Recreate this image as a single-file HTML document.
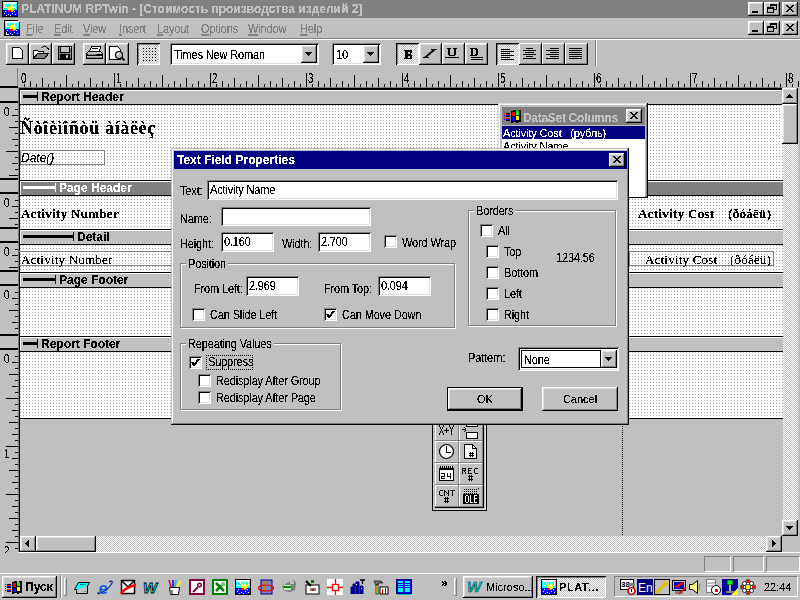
<!DOCTYPE html><html><head><meta charset="utf-8"><style>
*{margin:0;padding:0;box-sizing:border-box}
html,body{width:800px;height:600px;overflow:hidden;background:#c0c0c0;font-family:"Liberation Sans",sans-serif;font-size:11px;color:#000;position:relative}
.a{position:absolute}
.t{position:absolute;white-space:nowrap;line-height:13px}
.btn{position:absolute;background:#c0c0c0;box-shadow:inset -1px -1px #000,inset 1px 1px #fff,inset -2px -2px #808080,inset 2px 2px #dfdfdf}
.btn2{position:absolute;background:#c0c0c0;box-shadow:inset -1px -1px #000,inset 1px 1px #dfdfdf,inset -2px -2px #808080,inset 2px 2px #fff}
.tb{position:absolute;background:#c0c0c0;box-shadow:inset -1px -1px #000,inset 1px 1px #fff,inset -2px -2px #808080}
.sunk{position:absolute;background:#fff;box-shadow:inset 1px 1px #808080,inset -1px -1px #fff,inset 2px 2px #000,inset -2px -2px #dfdfdf}
.pressed{position:absolute;background:repeating-conic-gradient(#fff 0 25%,#c0c0c0 0 50%) 0 0/2px 2px;box-shadow:inset 1px 1px #000,inset -1px -1px #fff,inset 2px 2px #808080,inset -2px -2px #dfdfdf}
.grp{position:absolute;border:1px solid #808080;box-shadow:1px 1px #fff,inset 1px 1px #fff}
.chk{position:absolute;width:13px;height:13px;background:#fff;box-shadow:inset 1px 1px #808080,inset -1px -1px #fff,inset 2px 2px #000,inset -2px -2px #dfdfdf}
.dots{position:absolute;background-color:#a0a0a0;background-image:linear-gradient(to right,#fff 0 2px,transparent 2px 3px),linear-gradient(to bottom,#fff 0 2px,transparent 2px 3px);background-size:3px 3px}
.dither{position:absolute;background:repeating-conic-gradient(#fff 0 25%,#c0c0c0 0 50%) 0 0/2px 2px}
.serif{font-family:"Liberation Serif",serif}
.u{text-decoration:underline}
.k{position:absolute;background:#000}
.t{filter:url(#crisp)}</style></head><body>
<svg width="0" height="0" style="position:absolute"><filter id="crisp" x="0" y="0" width="100%" height="100%" color-interpolation-filters="sRGB"><feComponentTransfer><feFuncA type="discrete" tableValues="0 0 1 1 1"/></feComponentTransfer></filter></svg><div class="a" style="left:0px;top:0px;width:800px;height:18px;background:#808080;"></div>
<svg class="a" style="left:2px;top:1px" width="16" height="16" viewBox="0 0 16 16" shape-rendering="crispEdges"><rect x="0" y="0" width="16" height="16" fill="#000"/><rect x="1" y="1" width="14" height="8" fill="#00ffff"/><rect x="1" y="9" width="14" height="6" fill="#0000ff"/><rect x="1" y="1" width="14" height="1" fill="#fff"/><rect x="2" y="2" width="12" height="1" fill="#fff"/><path d="M2 3h1v4h-1zM13 3h1v4h-1zM3 6h2v1h-2zM11 6h2v1h-2zM5 3h1v2h-1zM10 3h1v2h-1z" fill="#fff"/><circle cx="9" cy="7.5" r="3.3" fill="#ffff00" shape-rendering="auto"/><rect x="9" y="5" width="2" height="2" fill="#fff"/><rect x="6" y="9" width="3" height="2" fill="#ff0000"/><path d="M3 10h1v1h-1zM12 10h1v1h-1zM2 12h1v1h-1zM6 13h1v1h-1zM10 12h1v1h-1zM13 13h1v1h-1zM8 14h1v1h-1zM4 14h1v1h-1z" fill="#fff"/></svg>
<div class="t" style="left:21px;top:3px;font-weight:bold;color:#c0c0c0;font-size:12px">PLATINUM RPTwin - [Стоимость производства изделий 2]</div>
<div class="btn" style="left:748px;top:2px;width:16px;height:14px;"></div>
<div class="btn" style="left:764px;top:2px;width:16px;height:14px;"></div>
<div class="btn" style="left:782px;top:2px;width:16px;height:14px;"></div>
<div class="a" style="left:752px;top:11px;width:6px;height:2px;background:#000;"></div>
<svg class="a" style="left:764px;top:2px" width="16" height="14" viewBox="0 0 16 14" shape-rendering="crispEdges"><rect x="6.5" y="2.5" width="6" height="5" fill="none" stroke="#000"/><rect x="6" y="2" width="7" height="2" fill="#000"/><rect x="3.5" y="5.5" width="6" height="5" fill="#c0c0c0" stroke="#000"/><rect x="3" y="5" width="7" height="2" fill="#000"/></svg>
<svg class="a" style="left:782px;top:2px" width="16" height="14" viewBox="0 0 16 14" shape-rendering="crispEdges"><rect x="4" y="3" width="1" height="1" fill="#000"/><rect x="5" y="3" width="1" height="1" fill="#000"/><rect x="10" y="3" width="1" height="1" fill="#000"/><rect x="11" y="3" width="1" height="1" fill="#000"/><rect x="5" y="4" width="1" height="1" fill="#000"/><rect x="6" y="4" width="1" height="1" fill="#000"/><rect x="9" y="4" width="1" height="1" fill="#000"/><rect x="10" y="4" width="1" height="1" fill="#000"/><rect x="6" y="5" width="1" height="1" fill="#000"/><rect x="7" y="5" width="1" height="1" fill="#000"/><rect x="8" y="5" width="1" height="1" fill="#000"/><rect x="9" y="5" width="1" height="1" fill="#000"/><rect x="7" y="6" width="1" height="1" fill="#000"/><rect x="8" y="6" width="1" height="1" fill="#000"/><rect x="6" y="7" width="1" height="1" fill="#000"/><rect x="7" y="7" width="1" height="1" fill="#000"/><rect x="8" y="7" width="1" height="1" fill="#000"/><rect x="9" y="7" width="1" height="1" fill="#000"/><rect x="5" y="8" width="1" height="1" fill="#000"/><rect x="6" y="8" width="1" height="1" fill="#000"/><rect x="9" y="8" width="1" height="1" fill="#000"/><rect x="10" y="8" width="1" height="1" fill="#000"/><rect x="4" y="9" width="1" height="1" fill="#000"/><rect x="5" y="9" width="1" height="1" fill="#000"/><rect x="10" y="9" width="1" height="1" fill="#000"/><rect x="11" y="9" width="1" height="1" fill="#000"/></svg>
<svg class="a" style="left:4px;top:20px" width="16" height="16" viewBox="0 0 16 16" shape-rendering="crispEdges"><rect x="0" y="0" width="16" height="16" fill="#000"/><rect x="1" y="1" width="14" height="8" fill="#00ffff"/><rect x="1" y="9" width="14" height="6" fill="#0000ff"/><rect x="1" y="1" width="14" height="1" fill="#fff"/><rect x="2" y="2" width="12" height="1" fill="#fff"/><path d="M2 3h1v4h-1zM13 3h1v4h-1zM3 6h2v1h-2zM11 6h2v1h-2zM5 3h1v2h-1zM10 3h1v2h-1z" fill="#fff"/><circle cx="9" cy="7.5" r="3.3" fill="#ffff00" shape-rendering="auto"/><rect x="9" y="5" width="2" height="2" fill="#fff"/><rect x="6" y="9" width="3" height="2" fill="#ff0000"/><path d="M3 10h1v1h-1zM12 10h1v1h-1zM2 12h1v1h-1zM6 13h1v1h-1zM10 12h1v1h-1zM13 13h1v1h-1zM8 14h1v1h-1zM4 14h1v1h-1z" fill="#fff"/><path d="M13 0 H16 V3 Z" fill="#c0c0c0"/><rect x="13" y="1" width="1" height="1" fill="#fff"/><rect x="14" y="2" width="1" height="1" fill="#fff"/><path d="M2 12h1v2h2v1h-3z" fill="#fff"/></svg>
<div class="t" style="left:26px;top:22px;color:#808080;font-size:11px;letter-spacing:-0.13px;transform:scaleY(1.12);transform-origin:0 0"><span class="u">F</span>ile</div>
<div class="t" style="left:54px;top:22px;color:#808080;font-size:11px;letter-spacing:-0.13px;transform:scaleY(1.12);transform-origin:0 0"><span class="u">E</span>dit</div>
<div class="t" style="left:83px;top:22px;color:#808080;font-size:11px;letter-spacing:-0.13px;transform:scaleY(1.12);transform-origin:0 0"><span class="u">V</span>iew</div>
<div class="t" style="left:119px;top:22px;color:#808080;font-size:11px;letter-spacing:-0.13px;transform:scaleY(1.12);transform-origin:0 0"><span class="u">I</span>nsert</div>
<div class="t" style="left:157px;top:22px;color:#808080;font-size:11px;letter-spacing:-0.13px;transform:scaleY(1.12);transform-origin:0 0"><span class="u">L</span>ayout</div>
<div class="t" style="left:201px;top:22px;color:#808080;font-size:11px;letter-spacing:-0.13px;transform:scaleY(1.12);transform-origin:0 0"><span class="u">O</span>ptions</div>
<div class="t" style="left:248px;top:22px;color:#808080;font-size:11px;letter-spacing:-0.13px;transform:scaleY(1.12);transform-origin:0 0"><span class="u">W</span>indow</div>
<div class="t" style="left:300px;top:22px;color:#808080;font-size:11px;letter-spacing:-0.13px;transform:scaleY(1.12);transform-origin:0 0"><span class="u">H</span>elp</div>
<div class="btn" style="left:748px;top:21px;width:16px;height:14px;"></div>
<div class="btn" style="left:764px;top:21px;width:16px;height:14px;"></div>
<div class="btn" style="left:782px;top:21px;width:16px;height:14px;"></div>
<div class="a" style="left:752px;top:30px;width:6px;height:2px;background:#000;"></div>
<svg class="a" style="left:764px;top:21px" width="16" height="14" viewBox="0 0 16 14" shape-rendering="crispEdges"><rect x="6.5" y="2.5" width="6" height="5" fill="none" stroke="#000"/><rect x="6" y="2" width="7" height="2" fill="#000"/><rect x="3.5" y="5.5" width="6" height="5" fill="#c0c0c0" stroke="#000"/><rect x="3" y="5" width="7" height="2" fill="#000"/></svg>
<svg class="a" style="left:782px;top:21px" width="16" height="14" viewBox="0 0 16 14" shape-rendering="crispEdges"><rect x="4" y="3" width="1" height="1" fill="#000"/><rect x="5" y="3" width="1" height="1" fill="#000"/><rect x="10" y="3" width="1" height="1" fill="#000"/><rect x="11" y="3" width="1" height="1" fill="#000"/><rect x="5" y="4" width="1" height="1" fill="#000"/><rect x="6" y="4" width="1" height="1" fill="#000"/><rect x="9" y="4" width="1" height="1" fill="#000"/><rect x="10" y="4" width="1" height="1" fill="#000"/><rect x="6" y="5" width="1" height="1" fill="#000"/><rect x="7" y="5" width="1" height="1" fill="#000"/><rect x="8" y="5" width="1" height="1" fill="#000"/><rect x="9" y="5" width="1" height="1" fill="#000"/><rect x="7" y="6" width="1" height="1" fill="#000"/><rect x="8" y="6" width="1" height="1" fill="#000"/><rect x="6" y="7" width="1" height="1" fill="#000"/><rect x="7" y="7" width="1" height="1" fill="#000"/><rect x="8" y="7" width="1" height="1" fill="#000"/><rect x="9" y="7" width="1" height="1" fill="#000"/><rect x="5" y="8" width="1" height="1" fill="#000"/><rect x="6" y="8" width="1" height="1" fill="#000"/><rect x="9" y="8" width="1" height="1" fill="#000"/><rect x="10" y="8" width="1" height="1" fill="#000"/><rect x="4" y="9" width="1" height="1" fill="#000"/><rect x="5" y="9" width="1" height="1" fill="#000"/><rect x="10" y="9" width="1" height="1" fill="#000"/><rect x="11" y="9" width="1" height="1" fill="#000"/></svg>
<div class="a" style="left:0px;top:38px;width:800px;height:1px;background:#808080;"></div>
<div class="a" style="left:0px;top:39px;width:800px;height:1px;background:#fff;"></div>
<div class="btn" style="left:6px;top:43px;width:23px;height:22px;"></div>
<div class="btn" style="left:29px;top:43px;width:23px;height:22px;"></div>
<div class="btn" style="left:52px;top:43px;width:23px;height:22px;"></div>
<div class="btn" style="left:83px;top:43px;width:23px;height:22px;"></div>
<div class="btn" style="left:106px;top:43px;width:23px;height:22px;"></div>
<div class="pressed" style="left:137px;top:43px;width:23px;height:22px;"></div>
<svg class="a" style="left:137px;top:43px" width="23" height="22" viewBox="0 0 23 22" shape-rendering="crispEdges"><rect x="6" y="5" width="1" height="1" fill="#000"/><rect x="6" y="8" width="1" height="1" fill="#000"/><rect x="6" y="11" width="1" height="1" fill="#000"/><rect x="6" y="14" width="1" height="1" fill="#000"/><rect x="6" y="17" width="1" height="1" fill="#000"/><rect x="9" y="5" width="1" height="1" fill="#000"/><rect x="9" y="8" width="1" height="1" fill="#000"/><rect x="9" y="11" width="1" height="1" fill="#000"/><rect x="9" y="14" width="1" height="1" fill="#000"/><rect x="9" y="17" width="1" height="1" fill="#000"/><rect x="12" y="5" width="1" height="1" fill="#000"/><rect x="12" y="8" width="1" height="1" fill="#000"/><rect x="12" y="11" width="1" height="1" fill="#000"/><rect x="12" y="14" width="1" height="1" fill="#000"/><rect x="12" y="17" width="1" height="1" fill="#000"/><rect x="15" y="5" width="1" height="1" fill="#000"/><rect x="15" y="8" width="1" height="1" fill="#000"/><rect x="15" y="11" width="1" height="1" fill="#000"/><rect x="15" y="14" width="1" height="1" fill="#000"/><rect x="15" y="17" width="1" height="1" fill="#000"/><rect x="18" y="5" width="1" height="1" fill="#000"/><rect x="18" y="8" width="1" height="1" fill="#000"/><rect x="18" y="11" width="1" height="1" fill="#000"/><rect x="18" y="14" width="1" height="1" fill="#000"/><rect x="18" y="17" width="1" height="1" fill="#000"/></svg>
<svg class="a" style="left:6px;top:43px" width="23" height="22" viewBox="0 0 23 22" shape-rendering="crispEdges"><path d="M6.5 4.5 H13.5 L16.5 7.5 V15.5 H6.5 Z" fill="#fff" stroke="#000"/><rect x="14" y="5" width="1" height="1" fill="#000"/><rect x="15" y="6" width="1" height="1" fill="#000"/></svg>
<svg class="a" style="left:29px;top:43px" width="23" height="22" viewBox="0 0 23 22" shape-rendering="crispEdges"><path d="M4.5 15.5 V7.5 H8.5 L9.5 8.5 H14.5 V10.5" fill="#fff" stroke="#000"/><path d="M4.5 15.5 L8.5 10.5 H19.5 L15.5 15.5 Z" fill="#808080" stroke="#000"/><path d="M12.5 4.5 Q15.5 1.5 18.5 4.5" fill="none" stroke="#000" shape-rendering="auto"/><path d="M17 5 H20 V8 Z" fill="#000"/></svg>
<svg class="a" style="left:52px;top:43px" width="23" height="22" viewBox="0 0 23 22" shape-rendering="crispEdges"><rect x="6.5" y="3.5" width="13" height="13" fill="#808080" stroke="#000"/><rect x="8.5" y="3.5" width="9" height="6" fill="#c0c0c0" stroke="#000"/><rect x="8" y="11" width="10" height="6" fill="#000"/><rect x="14" y="12" width="2" height="3" fill="#c0c0c0"/><rect x="18" y="4" width="1" height="1" fill="#fff"/></svg>
<svg class="a" style="left:83px;top:43px" width="23" height="22" viewBox="0 0 23 22" shape-rendering="crispEdges"><path d="M8.5 3.5 H17.5 L16.5 8.5 H6.5 Z" fill="#fff" stroke="#000"/><rect x="9" y="5" width="6" height="1" fill="#000"/><path d="M5.5 8.5 H17.5 L19.5 10.5 V15.5 H3.5 V10.5 Z" fill="#c0c0c0" stroke="#000"/><rect x="4" y="11" width="15" height="2" fill="#000"/><rect x="5" y="11" width="8" height="1" fill="#808080"/><rect x="17" y="9" width="1" height="1" fill="#fff"/><rect x="4" y="14" width="15" height="1" fill="#808080"/></svg>
<svg class="a" style="left:106px;top:43px" width="23" height="22" viewBox="0 0 23 22" shape-rendering="crispEdges"><path d="M3.5 3.5 H11.5 L14.5 6.5 V16.5 H3.5 Z" fill="#fff" stroke="#000"/><circle cx="13" cy="12" r="3.5" fill="#c0c0c0" stroke="#000" stroke-width="1.2" shape-rendering="auto"/><circle cx="12" cy="11" r="1" fill="#fff" shape-rendering="auto"/><path d="M15.5 14.5 L18.5 17.5" stroke="#000" stroke-width="2" shape-rendering="auto"/></svg>
<div class="sunk" style="left:170px;top:43px;width:149px;height:22px;"></div>
<div class="btn" style="left:301px;top:45px;width:16px;height:18px;"></div>
<svg class="a" style="left:301px;top:45px" width="16" height="18" viewBox="0 0 16 18" shape-rendering="crispEdges"><rect x="4" y="7" width="7" height="1" fill="#000"/><rect x="5" y="8" width="5" height="1" fill="#000"/><rect x="6" y="9" width="3" height="1" fill="#000"/><rect x="7" y="10" width="1" height="1" fill="#000"/></svg>
<div class="t" style="left:174px;top:48px;font-size:11px;letter-spacing:-0.15px;transform:scaleY(1.12);transform-origin:0 0">Times New Roman</div>
<div class="sunk" style="left:332px;top:43px;width:49px;height:22px;"></div>
<div class="btn" style="left:363px;top:45px;width:16px;height:18px;"></div>
<svg class="a" style="left:363px;top:45px" width="16" height="18" viewBox="0 0 16 18" shape-rendering="crispEdges"><rect x="4" y="7" width="7" height="1" fill="#000"/><rect x="5" y="8" width="5" height="1" fill="#000"/><rect x="6" y="9" width="3" height="1" fill="#000"/><rect x="7" y="10" width="1" height="1" fill="#000"/></svg>
<div class="t" style="left:336px;top:48px;font-size:11px;letter-spacing:-0.15px;transform:scaleY(1.12);transform-origin:0 0">10</div>
<div class="pressed" style="left:396px;top:43px;width:23px;height:22px;"></div>
<svg class="a" style="left:396px;top:43px" width="23" height="22" viewBox="0 0 23 22" shape-rendering="crispEdges"><path d="M8 7 H14 Q16 7 16 9 Q16 10.5 14.5 11 Q16.5 11.5 16.5 13.5 Q16.5 16 14 16 H8 V15 H9 V8 H8 Z" fill="#000"/><rect x="11.5" y="9" width="2" height="1.5" fill="#c0c0c0"/><rect x="11.5" y="12.5" width="2" height="2" fill="#c0c0c0"/></svg>
<div class="btn" style="left:419px;top:43px;width:23px;height:22px;"></div>
<svg class="a" style="left:419px;top:43px" width="23" height="22" viewBox="0 0 23 22" shape-rendering="crispEdges"><path d="M4.5 14.5 L14 6.5 L17 6.5 L7.5 14.5 Z" fill="#000" shape-rendering="auto"/><rect x="4" y="14" width="6" height="1" fill="#000"/><rect x="12" y="6" width="6" height="1" fill="#000"/></svg>
<div class="btn" style="left:442px;top:43px;width:23px;height:22px;"></div>
<svg class="a" style="left:442px;top:43px" width="23" height="22" viewBox="0 0 23 22" shape-rendering="crispEdges"><rect x="5" y="5" width="4" height="1" fill="#000"/><rect x="11" y="5" width="4" height="1" fill="#000"/><rect x="6" y="5" width="2" height="7" fill="#000"/><rect x="12" y="5" width="2" height="7" fill="#000"/><rect x="7" y="12" width="6" height="1" fill="#000"/><rect x="3" y="14" width="14" height="1" fill="#000"/></svg>
<div class="btn" style="left:465px;top:43px;width:23px;height:22px;"></div>
<svg class="a" style="left:465px;top:43px" width="23" height="22" viewBox="0 0 23 22" shape-rendering="crispEdges"><rect x="5" y="5" width="6" height="1" fill="#000"/><rect x="5" y="12" width="6" height="1" fill="#000"/><rect x="6" y="5" width="2" height="8" fill="#000"/><rect x="11" y="6" width="2" height="6" fill="#000"/><rect x="10" y="5" width="2" height="2" fill="#000"/><rect x="10" y="11" width="2" height="2" fill="#000"/><rect x="6" y="14" width="12" height="1" fill="#000"/><rect x="6" y="16" width="12" height="1" fill="#000"/></svg>
<div class="pressed" style="left:496px;top:43px;width:23px;height:22px;"></div>
<svg class="a" style="left:496px;top:43px" width="23" height="22" viewBox="0 0 23 22" shape-rendering="crispEdges"><rect x="5" y="6" width="9" height="1" fill="#000"/><rect x="5" y="8" width="13" height="1" fill="#000"/><rect x="5" y="10" width="9" height="1" fill="#000"/><rect x="5" y="12" width="13" height="1" fill="#000"/><rect x="5" y="14" width="9" height="1" fill="#000"/><rect x="5" y="16" width="13" height="1" fill="#000"/></svg>
<div class="tb" style="left:519px;top:43px;width:23px;height:22px;"></div>
<svg class="a" style="left:519px;top:43px" width="23" height="22" viewBox="0 0 23 22" shape-rendering="crispEdges"><rect x="7" y="5" width="7" height="1" fill="#000"/><rect x="4" y="7" width="13" height="1" fill="#000"/><rect x="6" y="9" width="9" height="1" fill="#000"/><rect x="4" y="11" width="13" height="1" fill="#000"/><rect x="7" y="13" width="7" height="1" fill="#000"/><rect x="4" y="15" width="13" height="1" fill="#000"/></svg>
<div class="tb" style="left:542px;top:43px;width:23px;height:22px;"></div>
<svg class="a" style="left:542px;top:43px" width="23" height="22" viewBox="0 0 23 22" shape-rendering="crispEdges"><rect x="8" y="5" width="9" height="1" fill="#000"/><rect x="4" y="7" width="13" height="1" fill="#000"/><rect x="8" y="9" width="9" height="1" fill="#000"/><rect x="4" y="11" width="13" height="1" fill="#000"/><rect x="8" y="13" width="9" height="1" fill="#000"/><rect x="4" y="15" width="13" height="1" fill="#000"/></svg>
<div class="tb" style="left:565px;top:43px;width:23px;height:22px;"></div>
<svg class="a" style="left:565px;top:43px" width="23" height="22" viewBox="0 0 23 22" shape-rendering="crispEdges"><rect x="4" y="5" width="13" height="1" fill="#000"/><rect x="4" y="7" width="13" height="1" fill="#000"/><rect x="4" y="9" width="13" height="1" fill="#000"/><rect x="4" y="11" width="13" height="1" fill="#000"/><rect x="4" y="13" width="13" height="1" fill="#000"/><rect x="4" y="15" width="13" height="1" fill="#000"/></svg>
<div class="a" style="left:595px;top:40px;width:1px;height:26px;background:#808080;"></div>
<div class="a" style="left:596px;top:40px;width:1px;height:26px;background:#fff;"></div>
<div class="a" style="left:17px;top:68px;width:1px;height:20px;background:#808080;"></div>
<svg class="a" style="left:0px;top:68px" width="800" height="20" viewBox="0 0 800 20" shape-rendering="crispEdges"></svg>
<svg class="a" style="left:0;top:0" width="800" height="90" shape-rendering="crispEdges"><rect x="24" y="84" width="1" height="3" fill="#000"/><rect x="30" y="81" width="1" height="6" fill="#000"/><rect x="36" y="84" width="1" height="3" fill="#000"/><rect x="42" y="78" width="1" height="9" fill="#000"/><rect x="48" y="84" width="1" height="3" fill="#000"/><rect x="54" y="81" width="1" height="6" fill="#000"/><rect x="60" y="84" width="1" height="3" fill="#000"/><rect x="66" y="75" width="1" height="12" fill="#000"/><rect x="72" y="84" width="1" height="3" fill="#000"/><rect x="78" y="81" width="1" height="6" fill="#000"/><rect x="84" y="84" width="1" height="3" fill="#000"/><rect x="90" y="78" width="1" height="9" fill="#000"/><rect x="96" y="84" width="1" height="3" fill="#000"/><rect x="102" y="81" width="1" height="6" fill="#000"/><rect x="108" y="84" width="1" height="3" fill="#000"/><rect x="114" y="73" width="1" height="14" fill="#000"/><rect x="120" y="84" width="1" height="3" fill="#000"/><rect x="126" y="81" width="1" height="6" fill="#000"/><rect x="132" y="84" width="1" height="3" fill="#000"/><rect x="138" y="78" width="1" height="9" fill="#000"/><rect x="144" y="84" width="1" height="3" fill="#000"/><rect x="150" y="81" width="1" height="6" fill="#000"/><rect x="156" y="84" width="1" height="3" fill="#000"/><rect x="162" y="75" width="1" height="12" fill="#000"/><rect x="168" y="84" width="1" height="3" fill="#000"/><rect x="174" y="81" width="1" height="6" fill="#000"/><rect x="180" y="84" width="1" height="3" fill="#000"/><rect x="186" y="78" width="1" height="9" fill="#000"/><rect x="192" y="84" width="1" height="3" fill="#000"/><rect x="198" y="81" width="1" height="6" fill="#000"/><rect x="204" y="84" width="1" height="3" fill="#000"/><rect x="210" y="73" width="1" height="14" fill="#000"/><rect x="216" y="84" width="1" height="3" fill="#000"/><rect x="222" y="81" width="1" height="6" fill="#000"/><rect x="228" y="84" width="1" height="3" fill="#000"/><rect x="234" y="78" width="1" height="9" fill="#000"/><rect x="240" y="84" width="1" height="3" fill="#000"/><rect x="246" y="81" width="1" height="6" fill="#000"/><rect x="252" y="84" width="1" height="3" fill="#000"/><rect x="258" y="75" width="1" height="12" fill="#000"/><rect x="264" y="84" width="1" height="3" fill="#000"/><rect x="270" y="81" width="1" height="6" fill="#000"/><rect x="276" y="84" width="1" height="3" fill="#000"/><rect x="282" y="78" width="1" height="9" fill="#000"/><rect x="288" y="84" width="1" height="3" fill="#000"/><rect x="294" y="81" width="1" height="6" fill="#000"/><rect x="300" y="84" width="1" height="3" fill="#000"/><rect x="306" y="73" width="1" height="14" fill="#000"/><rect x="312" y="84" width="1" height="3" fill="#000"/><rect x="318" y="81" width="1" height="6" fill="#000"/><rect x="324" y="84" width="1" height="3" fill="#000"/><rect x="330" y="78" width="1" height="9" fill="#000"/><rect x="336" y="84" width="1" height="3" fill="#000"/><rect x="342" y="81" width="1" height="6" fill="#000"/><rect x="348" y="84" width="1" height="3" fill="#000"/><rect x="354" y="75" width="1" height="12" fill="#000"/><rect x="360" y="84" width="1" height="3" fill="#000"/><rect x="366" y="81" width="1" height="6" fill="#000"/><rect x="372" y="84" width="1" height="3" fill="#000"/><rect x="378" y="78" width="1" height="9" fill="#000"/><rect x="384" y="84" width="1" height="3" fill="#000"/><rect x="390" y="81" width="1" height="6" fill="#000"/><rect x="396" y="84" width="1" height="3" fill="#000"/><rect x="402" y="73" width="1" height="14" fill="#000"/><rect x="408" y="84" width="1" height="3" fill="#000"/><rect x="414" y="81" width="1" height="6" fill="#000"/><rect x="420" y="84" width="1" height="3" fill="#000"/><rect x="426" y="78" width="1" height="9" fill="#000"/><rect x="432" y="84" width="1" height="3" fill="#000"/><rect x="438" y="81" width="1" height="6" fill="#000"/><rect x="444" y="84" width="1" height="3" fill="#000"/><rect x="450" y="75" width="1" height="12" fill="#000"/><rect x="456" y="84" width="1" height="3" fill="#000"/><rect x="462" y="81" width="1" height="6" fill="#000"/><rect x="468" y="84" width="1" height="3" fill="#000"/><rect x="474" y="78" width="1" height="9" fill="#000"/><rect x="480" y="84" width="1" height="3" fill="#000"/><rect x="486" y="81" width="1" height="6" fill="#000"/><rect x="492" y="84" width="1" height="3" fill="#000"/><rect x="498" y="73" width="1" height="14" fill="#000"/><rect x="504" y="84" width="1" height="3" fill="#000"/><rect x="510" y="81" width="1" height="6" fill="#000"/><rect x="516" y="84" width="1" height="3" fill="#000"/><rect x="522" y="78" width="1" height="9" fill="#000"/><rect x="528" y="84" width="1" height="3" fill="#000"/><rect x="534" y="81" width="1" height="6" fill="#000"/><rect x="540" y="84" width="1" height="3" fill="#000"/><rect x="546" y="75" width="1" height="12" fill="#000"/><rect x="552" y="84" width="1" height="3" fill="#000"/><rect x="558" y="81" width="1" height="6" fill="#000"/><rect x="564" y="84" width="1" height="3" fill="#000"/><rect x="570" y="78" width="1" height="9" fill="#000"/><rect x="576" y="84" width="1" height="3" fill="#000"/><rect x="582" y="81" width="1" height="6" fill="#000"/><rect x="588" y="84" width="1" height="3" fill="#000"/><rect x="594" y="73" width="1" height="14" fill="#000"/><rect x="600" y="84" width="1" height="3" fill="#000"/><rect x="606" y="81" width="1" height="6" fill="#000"/><rect x="612" y="84" width="1" height="3" fill="#000"/><rect x="618" y="78" width="1" height="9" fill="#000"/><rect x="624" y="84" width="1" height="3" fill="#000"/><rect x="630" y="81" width="1" height="6" fill="#000"/><rect x="636" y="84" width="1" height="3" fill="#000"/><rect x="642" y="75" width="1" height="12" fill="#000"/><rect x="648" y="84" width="1" height="3" fill="#000"/><rect x="654" y="81" width="1" height="6" fill="#000"/><rect x="660" y="84" width="1" height="3" fill="#000"/><rect x="666" y="78" width="1" height="9" fill="#000"/><rect x="672" y="84" width="1" height="3" fill="#000"/><rect x="678" y="81" width="1" height="6" fill="#000"/><rect x="684" y="84" width="1" height="3" fill="#000"/><rect x="690" y="73" width="1" height="14" fill="#000"/><rect x="696" y="84" width="1" height="3" fill="#000"/><rect x="702" y="81" width="1" height="6" fill="#000"/><rect x="708" y="84" width="1" height="3" fill="#000"/><rect x="714" y="78" width="1" height="9" fill="#000"/><rect x="720" y="84" width="1" height="3" fill="#000"/><rect x="726" y="81" width="1" height="6" fill="#000"/><rect x="732" y="84" width="1" height="3" fill="#000"/><rect x="738" y="75" width="1" height="12" fill="#000"/><rect x="744" y="84" width="1" height="3" fill="#000"/><rect x="750" y="81" width="1" height="6" fill="#000"/><rect x="756" y="84" width="1" height="3" fill="#000"/><rect x="762" y="78" width="1" height="9" fill="#000"/><rect x="768" y="84" width="1" height="3" fill="#000"/><rect x="774" y="81" width="1" height="6" fill="#000"/><rect x="780" y="84" width="1" height="3" fill="#000"/><rect x="786" y="73" width="1" height="14" fill="#000"/><rect x="792" y="84" width="1" height="3" fill="#000"/><rect x="798" y="81" width="1" height="6" fill="#000"/></svg>
<div class="t" style="left:21px;top:72px;font-size:14px;transform:scaleX(0.7);transform-origin:0 0">0</div>
<div class="t" style="left:116px;top:72px;font-size:14px;transform:scaleX(0.7);transform-origin:0 0">1</div>
<div class="t" style="left:212px;top:72px;font-size:14px;transform:scaleX(0.7);transform-origin:0 0">2</div>
<div class="t" style="left:308px;top:72px;font-size:14px;transform:scaleX(0.7);transform-origin:0 0">3</div>
<div class="t" style="left:404px;top:72px;font-size:14px;transform:scaleX(0.7);transform-origin:0 0">4</div>
<div class="t" style="left:500px;top:72px;font-size:14px;transform:scaleX(0.7);transform-origin:0 0">5</div>
<div class="t" style="left:596px;top:72px;font-size:14px;transform:scaleX(0.7);transform-origin:0 0">6</div>
<div class="t" style="left:692px;top:72px;font-size:14px;transform:scaleX(0.7);transform-origin:0 0">7</div>
<div class="t" style="left:788px;top:72px;font-size:14px;transform:scaleX(0.7);transform-origin:0 0">8</div>
<div class="a" style="left:0px;top:86px;width:18px;height:2px;background:#000;"></div>
<div class="a" style="left:18px;top:87px;width:1px;height:465px;background:#808080;"></div>
<div class="a" style="left:18px;top:87px;width:765px;height:1px;background:#808080;"></div>
<div class="a" style="left:19px;top:88px;width:764px;height:1px;background:#000;"></div>
<div class="a" style="left:19px;top:88px;width:1px;height:464px;background:#000;"></div>
<div class="dots" style="left:20px;top:105px;width:763px;height:75px;background-position:1px 1px"></div>
<div class="dots" style="left:20px;top:196px;width:763px;height:33px;background-position:1px 1px"></div>
<div class="dots" style="left:20px;top:245px;width:763px;height:27px;background-position:1px 1px"></div>
<div class="dots" style="left:20px;top:288px;width:763px;height:48px;background-position:1px 1px"></div>
<div class="dots" style="left:20px;top:352px;width:763px;height:66px;background-position:1px 1px"></div>
<div class="a" style="left:19px;top:418px;width:764px;height:1px;background:#000;"></div>
<div class="a" style="left:19px;top:89px;width:764px;height:16px;background:#000;"></div>
<div class="a" style="left:20px;top:90px;width:763px;height:14px;background:#fff;"></div>
<div class="a" style="left:21px;top:91px;width:762px;height:13px;background:#c0c0c0;"></div>
<div class="a" style="left:23px;top:95px;width:14px;height:3px;background:#000;"></div>
<div class="a" style="left:37px;top:92px;width:1px;height:9px;background:#000;"></div>
<div class="t" style="left:41px;top:91px;font-weight:bold;font-size:12px;color:#000">Report Header</div>
<div class="a" style="left:19px;top:180px;width:764px;height:16px;background:#000;"></div>
<div class="a" style="left:20px;top:181px;width:763px;height:14px;background:#fff;"></div>
<div class="a" style="left:21px;top:182px;width:762px;height:13px;background:#808080;"></div>
<div class="a" style="left:23px;top:186px;width:32px;height:3px;background:#fff;"></div>
<div class="a" style="left:55px;top:183px;width:1px;height:9px;background:#fff;"></div>
<div class="t" style="left:59px;top:182px;font-weight:bold;font-size:12px;color:#fff">Page Header</div>
<div class="a" style="left:19px;top:229px;width:764px;height:16px;background:#000;"></div>
<div class="a" style="left:20px;top:230px;width:763px;height:14px;background:#fff;"></div>
<div class="a" style="left:21px;top:231px;width:762px;height:13px;background:#c0c0c0;"></div>
<div class="a" style="left:23px;top:235px;width:50px;height:3px;background:#000;"></div>
<div class="a" style="left:73px;top:232px;width:1px;height:9px;background:#000;"></div>
<div class="t" style="left:77px;top:231px;font-weight:bold;font-size:12px;color:#000">Detail</div>
<div class="a" style="left:19px;top:272px;width:764px;height:16px;background:#000;"></div>
<div class="a" style="left:20px;top:273px;width:763px;height:14px;background:#fff;"></div>
<div class="a" style="left:21px;top:274px;width:762px;height:13px;background:#c0c0c0;"></div>
<div class="a" style="left:23px;top:278px;width:32px;height:3px;background:#000;"></div>
<div class="a" style="left:55px;top:275px;width:1px;height:9px;background:#000;"></div>
<div class="t" style="left:59px;top:274px;font-weight:bold;font-size:12px;color:#000">Page Footer</div>
<div class="a" style="left:19px;top:336px;width:764px;height:16px;background:#000;"></div>
<div class="a" style="left:20px;top:337px;width:763px;height:14px;background:#fff;"></div>
<div class="a" style="left:21px;top:338px;width:762px;height:13px;background:#c0c0c0;"></div>
<div class="a" style="left:23px;top:342px;width:14px;height:3px;background:#000;"></div>
<div class="a" style="left:37px;top:339px;width:1px;height:9px;background:#000;"></div>
<div class="t" style="left:41px;top:338px;font-weight:bold;font-size:12px;color:#000">Report Footer</div>
<svg class="a" style="left:0;top:0" width="18" height="600" shape-rendering="crispEdges"><rect x="15" y="109" width="3" height="1" fill="#000"/><rect x="12" y="115" width="6" height="1" fill="#000"/><rect x="15" y="121" width="3" height="1" fill="#000"/><rect x="9" y="127" width="9" height="1" fill="#000"/><rect x="15" y="133" width="3" height="1" fill="#000"/><rect x="12" y="139" width="6" height="1" fill="#000"/><rect x="15" y="145" width="3" height="1" fill="#000"/><rect x="6" y="151" width="12" height="1" fill="#000"/><rect x="15" y="157" width="3" height="1" fill="#000"/><rect x="12" y="163" width="6" height="1" fill="#000"/><rect x="15" y="169" width="3" height="1" fill="#000"/><rect x="9" y="175" width="9" height="1" fill="#000"/><rect x="15" y="200" width="3" height="1" fill="#000"/><rect x="12" y="206" width="6" height="1" fill="#000"/><rect x="15" y="212" width="3" height="1" fill="#000"/><rect x="9" y="218" width="9" height="1" fill="#000"/><rect x="15" y="224" width="3" height="1" fill="#000"/><rect x="15" y="249" width="3" height="1" fill="#000"/><rect x="12" y="255" width="6" height="1" fill="#000"/><rect x="15" y="261" width="3" height="1" fill="#000"/><rect x="9" y="267" width="9" height="1" fill="#000"/><rect x="15" y="292" width="3" height="1" fill="#000"/><rect x="12" y="298" width="6" height="1" fill="#000"/><rect x="15" y="304" width="3" height="1" fill="#000"/><rect x="9" y="310" width="9" height="1" fill="#000"/><rect x="15" y="316" width="3" height="1" fill="#000"/><rect x="12" y="322" width="6" height="1" fill="#000"/><rect x="15" y="328" width="3" height="1" fill="#000"/><rect x="6" y="334" width="12" height="1" fill="#000"/><rect x="15" y="356" width="3" height="1" fill="#000"/><rect x="12" y="362" width="6" height="1" fill="#000"/><rect x="15" y="368" width="3" height="1" fill="#000"/><rect x="9" y="374" width="9" height="1" fill="#000"/><rect x="15" y="380" width="3" height="1" fill="#000"/><rect x="12" y="386" width="6" height="1" fill="#000"/><rect x="15" y="392" width="3" height="1" fill="#000"/><rect x="6" y="398" width="12" height="1" fill="#000"/><rect x="15" y="404" width="3" height="1" fill="#000"/><rect x="12" y="410" width="6" height="1" fill="#000"/><rect x="15" y="416" width="3" height="1" fill="#000"/><rect x="9" y="422" width="9" height="1" fill="#000"/><rect x="15" y="428" width="3" height="1" fill="#000"/><rect x="12" y="434" width="6" height="1" fill="#000"/><rect x="15" y="440" width="3" height="1" fill="#000"/><rect x="6" y="446" width="12" height="1" fill="#000"/><rect x="15" y="452" width="3" height="1" fill="#000"/><rect x="12" y="458" width="6" height="1" fill="#000"/><rect x="15" y="464" width="3" height="1" fill="#000"/><rect x="9" y="470" width="9" height="1" fill="#000"/><rect x="15" y="476" width="3" height="1" fill="#000"/><rect x="12" y="482" width="6" height="1" fill="#000"/><rect x="15" y="488" width="3" height="1" fill="#000"/><rect x="6" y="494" width="12" height="1" fill="#000"/><rect x="15" y="500" width="3" height="1" fill="#000"/><rect x="12" y="506" width="6" height="1" fill="#000"/><rect x="15" y="512" width="3" height="1" fill="#000"/><rect x="9" y="518" width="9" height="1" fill="#000"/><rect x="15" y="524" width="3" height="1" fill="#000"/><rect x="12" y="530" width="6" height="1" fill="#000"/><rect x="15" y="536" width="3" height="1" fill="#000"/><rect x="6" y="542" width="12" height="1" fill="#000"/><rect x="15" y="548" width="3" height="1" fill="#000"/></svg>
<div class="a" style="left:0px;top:86px;width:18px;height:2px;background:#000;"></div>
<div class="a" style="left:0px;top:101px;width:18px;height:2px;background:#000;"></div>
<div class="a" style="left:0px;top:178px;width:18px;height:2px;background:#000;"></div>
<div class="a" style="left:0px;top:192px;width:18px;height:2px;background:#000;"></div>
<div class="a" style="left:0px;top:227px;width:18px;height:2px;background:#000;"></div>
<div class="a" style="left:0px;top:241px;width:18px;height:2px;background:#000;"></div>
<div class="a" style="left:0px;top:270px;width:18px;height:2px;background:#000;"></div>
<div class="a" style="left:0px;top:284px;width:18px;height:2px;background:#000;"></div>
<div class="a" style="left:0px;top:334px;width:18px;height:2px;background:#000;"></div>
<div class="a" style="left:0px;top:348px;width:18px;height:2px;background:#000;"></div>
<div class="t" style="left:4px;top:106px;font-size:12px;transform:scaleX(0.8);transform-origin:0 0">0</div>
<div class="t" style="left:4px;top:197px;font-size:12px;transform:scaleX(0.8);transform-origin:0 0">0</div>
<div class="t" style="left:4px;top:246px;font-size:12px;transform:scaleX(0.8);transform-origin:0 0">0</div>
<div class="t" style="left:4px;top:289px;font-size:12px;transform:scaleX(0.8);transform-origin:0 0">0</div>
<div class="t" style="left:4px;top:353px;font-size:12px;transform:scaleX(0.8);transform-origin:0 0">0</div>
<div class="t" style="left:4px;top:448px;font-size:12px;transform:scaleX(0.8);transform-origin:0 0">1</div>
<div class="a" style="left:0;top:540px;width:17px;height:13px;overflow:hidden"><div class="t" style="left:4px;top:5px;font-size:12px;transform:scaleX(0.8);transform-origin:0 0">2</div></div>
<div class="t" style="left:20px;top:118px;font-family:'Liberation Serif',serif;font-weight:bold;font-size:18px;line-height:20px;letter-spacing:0.65px">Ñòîèìîñòü àíàëèç</div>
<div class="a" style="left:20px;top:150px;width:85px;height:15px;border:1px solid #808080"></div>
<div class="t" style="left:21px;top:152px;font-style:italic;font-size:12px">Date()</div>
<div class="t" style="left:21px;top:207px;font-family:'Liberation Serif',serif;font-weight:bold;font-size:13px;letter-spacing:0.3px">Activity Number</div>
<div class="a" style="left:19px;top:251px;width:160px;height:15px;border:1px solid #808080;border-left:none"></div>
<div class="t" style="left:21px;top:253px;font-family:'Liberation Serif',serif;font-size:13px;letter-spacing:0.2px">Activity Number</div>
<div class="t" style="left:638px;top:207px;font-family:'Liberation Serif',serif;font-weight:bold;font-size:13px;letter-spacing:0.3px">Activity Cost</div>
<div class="t" style="left:728px;top:207px;font-family:'Liberation Serif',serif;font-weight:bold;font-size:13px;letter-spacing:0.3px">(ðóáëü)</div>
<div class="a" style="left:629px;top:251px;width:145px;height:15px;border:1px solid #808080"></div>
<div class="t" style="left:645px;top:253px;font-family:'Liberation Serif',serif;font-size:13px;letter-spacing:0.2px">Activity Cost</div>
<div class="t" style="left:730px;top:253px;font-family:'Liberation Serif',serif;font-size:13px;letter-spacing:0.2px">(ðóáëü)</div>
<div class="dither" style="left:783px;top:88px;width:15px;height:448px;"></div>
<div class="btn" style="left:782px;top:88px;width:16px;height:16px;"></div>
<svg class="a" style="left:782px;top:88px" width="16" height="16" viewBox="0 0 16 16" shape-rendering="crispEdges"><rect x="4" y="9" width="7" height="1" fill="#000"/><rect x="5" y="8" width="5" height="1" fill="#000"/><rect x="6" y="7" width="3" height="1" fill="#000"/><rect x="7" y="6" width="1" height="1" fill="#000"/></svg>
<div class="btn" style="left:782px;top:104px;width:16px;height:40px;"></div>
<div class="btn" style="left:782px;top:520px;width:16px;height:16px;"></div>
<svg class="a" style="left:782px;top:520px" width="16" height="16" viewBox="0 0 16 16" shape-rendering="crispEdges"><rect x="4" y="6" width="7" height="1" fill="#000"/><rect x="5" y="7" width="5" height="1" fill="#000"/><rect x="6" y="8" width="3" height="1" fill="#000"/><rect x="7" y="9" width="1" height="1" fill="#000"/></svg>
<div class="dither" style="left:20px;top:536px;width:747px;height:16px;"></div>
<div class="btn" style="left:20px;top:536px;width:16px;height:16px;"></div>
<svg class="a" style="left:20px;top:536px" width="16" height="16" viewBox="0 0 16 16" shape-rendering="crispEdges"><rect x="8" y="4" width="1" height="7" fill="#000"/><rect x="7" y="5" width="1" height="5" fill="#000"/><rect x="6" y="6" width="1" height="3" fill="#000"/><rect x="5" y="7" width="1" height="1" fill="#000"/></svg>
<div class="btn" style="left:36px;top:536px;width:60px;height:16px;"></div>
<div class="btn" style="left:766px;top:536px;width:16px;height:16px;"></div>
<svg class="a" style="left:766px;top:536px" width="16" height="16" viewBox="0 0 16 16" shape-rendering="crispEdges"><rect x="6" y="4" width="1" height="7" fill="#000"/><rect x="7" y="5" width="1" height="5" fill="#000"/><rect x="8" y="6" width="1" height="3" fill="#000"/><rect x="9" y="7" width="1" height="1" fill="#000"/></svg>
<div class="a" style="left:18px;top:552px;width:782px;height:1px;background:#fff;"></div>
<div class="a" style="left:704px;top:556px;width:27px;height:16px;border-top:1px solid #808080;border-left:1px solid #808080;border-right:1px solid #fff;border-bottom:1px solid #fff"></div>
<div class="a" style="left:733px;top:556px;width:31px;height:16px;border-top:1px solid #808080;border-left:1px solid #808080;border-right:1px solid #fff;border-bottom:1px solid #fff"></div>
<div class="a" style="left:766px;top:556px;width:34px;height:16px;border-top:1px solid #808080;border-left:1px solid #808080;border-right:1px solid #fff;border-bottom:1px solid #fff"></div>
<div class="a" style="left:0px;top:572px;width:800px;height:1px;background:#c0c0c0;"></div>
<div class="a" style="left:0px;top:573px;width:800px;height:1px;background:#fff;"></div>
<div class="btn" style="left:2px;top:576px;width:55px;height:22px;"></div>
<div class="t" style="left:25px;top:581px;font-weight:bold;font-size:12px">Пуск</div>
<svg class="a" style="left:5px;top:580px" width="17" height="15" viewBox="0 0 17 15" shape-rendering="crispEdges"><path d="M7 2h2v-1h3v1h2v-1h3v12h-3v1h-2v-1h-3v1h-2z" fill="#000"/><rect x="8" y="3" width="3" height="4" fill="#ff0000"/><rect x="12" y="2" width="3" height="4" fill="#00ff00"/><rect x="8" y="8" width="3" height="4" fill="#0000ff"/><rect x="12" y="7" width="3" height="4" fill="#ffff00"/><path d="M0 4h1v1h-1zM0 8h1v1h-1zM2 5h4v1h-4zM2 9h4v1h-4z" fill="#ff0000"/><path d="M0 6h1v1h-1zM0 10h1v1h-1zM2 6h4v1h-4zM2 10h4v1h-4z" fill="#0000ff"/><path d="M2 4h4v1h-4zM2 7h4v1h-4zM2 11h4v1h-4z" fill="#000"/></svg>
<div class="a" style="left:60px;top:575px;width:1px;height:23px;background:#808080;"></div>
<div class="a" style="left:61px;top:575px;width:1px;height:23px;background:#fff;"></div>
<div class="a" style="left:64px;top:578px;width:2px;height:1px;background:#fff;"></div>
<div class="a" style="left:64px;top:578px;width:1px;height:17px;background:#fff;"></div>
<div class="a" style="left:66px;top:578px;width:1px;height:18px;background:#808080;"></div>
<div class="a" style="left:64px;top:595px;width:3px;height:1px;background:#808080;"></div>
<svg class="a" style="left:74px;top:579px" width="16" height="16" viewBox="0 0 16 16"><path d="M4.5 3.5 H15.5 L11.5 10.5 H0.5 Z" fill="#00ffff" stroke="#000"/><rect x="6" y="5" width="6" height="1" fill="#008080"/><path d="M2.5 10.5 V14.5 H13.5 V7" fill="#c0c0c0" stroke="#000"/><rect x="10" y="12" width="2" height="1" fill="#808080"/></svg>
<svg class="a" style="left:97px;top:579px" width="16" height="16" viewBox="0 0 16 16"><text x="1.5" y="14.5" font-family="Liberation Sans" font-weight="bold" font-size="17" fill="#1060e0">e</text><path d="M2 13 Q-1 16 4 14 Q12 10 15 4 Q16 1 12 3" fill="none" stroke="#0030a0" stroke-width="1.2" shape-rendering="auto"/></svg>
<svg class="a" style="left:120px;top:579px" width="16" height="16" viewBox="0 0 16 16"><rect x="1.5" y="1.5" width="13" height="13" fill="#fff" stroke="#000" stroke-width="1.5"/><path d="M2 2 L8 8 L14 2" fill="none" stroke="#000" stroke-width="1.5"/><path d="M1 15 Q4 9 16 6" fill="none" stroke="#ff0000" stroke-width="2.5" shape-rendering="auto"/></svg>
<svg class="a" style="left:143px;top:579px" width="16" height="16" viewBox="0 0 16 16"><text x="0" y="14" font-family="Liberation Sans" font-style="italic" font-weight="bold" font-size="15" fill="#00ffff" stroke="#000" stroke-width="0.8">W</text></svg>
<svg class="a" style="left:166px;top:579px" width="16" height="16" viewBox="0 0 16 16"><path d="M3.5 8.5 H13.5 L12.5 15.5 H4.5 Z" fill="#fff" stroke="#000"/><rect x="4" y="11" width="3" height="4" fill="#808080"/><path d="M5 8 L3 1" stroke="#ff0000" stroke-width="1.5"/><path d="M7 8 L7 1" stroke="#0000ff" stroke-width="1.5"/><path d="M9 8 L10 1" stroke="#00c0c0" stroke-width="1.5"/><path d="M11 8 L15 2" stroke="#ffff00" stroke-width="1.5"/></svg>
<svg class="a" style="left:189px;top:579px" width="16" height="16" viewBox="0 0 16 16"><rect x="0" y="0" width="16" height="16" fill="#800040"/><rect x="2" y="2" width="12" height="12" fill="#fff"/><path d="M4 13 L9 8" stroke="#800040" stroke-width="2"/><circle cx="10.5" cy="6" r="2.5" fill="#800040"/><circle cx="10.5" cy="6" r="1" fill="#fff"/></svg>
<svg class="a" style="left:212px;top:579px" width="16" height="16" viewBox="0 0 16 16"><rect x="0" y="0" width="16" height="16" fill="#008000"/><rect x="2" y="2" width="12" height="12" fill="#fff"/><path d="M4 4 L12 12 M12 4 L4 12" stroke="#008000" stroke-width="2.5"/><rect x="9" y="4" width="4" height="3" fill="#80c080"/></svg>
<svg class="a" style="left:235px;top:579px" width="16" height="16" viewBox="0 0 16 16" shape-rendering="crispEdges"><rect x="0" y="0" width="16" height="16" fill="#000"/><rect x="1" y="1" width="14" height="8" fill="#00ffff"/><rect x="1" y="9" width="14" height="6" fill="#0000ff"/><rect x="1" y="1" width="14" height="1" fill="#fff"/><rect x="2" y="2" width="12" height="1" fill="#fff"/><path d="M2 3h1v4h-1zM13 3h1v4h-1zM3 6h2v1h-2zM11 6h2v1h-2zM5 3h1v2h-1zM10 3h1v2h-1z" fill="#fff"/><circle cx="9" cy="7.5" r="3.3" fill="#ffff00" shape-rendering="auto"/><rect x="9" y="5" width="2" height="2" fill="#fff"/><rect x="6" y="9" width="3" height="2" fill="#ff0000"/><path d="M3 10h1v1h-1zM12 10h1v1h-1zM2 12h1v1h-1zM6 13h1v1h-1zM10 12h1v1h-1zM13 13h1v1h-1zM8 14h1v1h-1zM4 14h1v1h-1z" fill="#fff"/></svg>
<svg class="a" style="left:258px;top:579px" width="16" height="16" viewBox="0 0 16 16"><rect x="3" y="1" width="11" height="14" fill="#8080c0" stroke="#000080"/><path d="M7 3 V13 M8 3 H10" stroke="#c08000" stroke-width="2"/><ellipse cx="8" cy="9" rx="7.5" ry="3" fill="none" stroke="#e00000" stroke-width="1.2" shape-rendering="auto"/></svg>
<svg class="a" style="left:281px;top:579px" width="16" height="16" viewBox="0 0 16 16"><path d="M1 7 L8 3 L13 1 L15 4 L14 11 L9 13 L3 12 Z" fill="#808080"/><rect x="3" y="6" width="7" height="5" fill="#c0ffc0"/><path d="M3 8 H10" stroke="#008000" stroke-width="2"/><rect x="9" y="2" width="4" height="3" fill="#c0c0c0"/></svg>
<svg class="a" style="left:304px;top:579px" width="16" height="16" viewBox="0 0 16 16"><rect x="2" y="6" width="13" height="9" fill="#fff" stroke="#000"/><path d="M2 2 L7 7" stroke="#000" stroke-width="2"/><rect x="7" y="1" width="3" height="3" fill="#008000"/><rect x="6" y="9" width="6" height="3" fill="#808080"/><rect x="8" y="10" width="2" height="2" fill="#ff0000"/></svg>
<svg class="a" style="left:327px;top:579px" width="16" height="16" viewBox="0 0 16 16"><rect x="0" y="0" width="16" height="16" fill="#fff"/><rect x="5.5" y="5.5" width="6" height="6" fill="none" stroke="#ff0000" stroke-width="1.3"/><path d="M8.5 0 V5 M8.5 12 V16 M0 8.5 H5 M12 8.5 H16" stroke="#ff0000" stroke-width="1.3"/></svg>
<svg class="a" style="left:350px;top:579px" width="16" height="16" viewBox="0 0 16 16"><path d="M1 15 V8 H3 V5 H5 V15 M6 15 V3 H9 V15 M10 15 V7 H13 V15" fill="#0000a0" stroke="#000080"/><rect x="6" y="5" width="1" height="1" fill="#fff"/><rect x="11" y="9" width="1" height="1" fill="#fff"/><path d="M10 1 H15 M12.5 1 V5" stroke="#000" stroke-width="1.3"/></svg>
<svg class="a" style="left:373px;top:579px" width="16" height="16" viewBox="0 0 16 16"><path d="M1 2 H8 L10 4 H5 V6 H3 Z" fill="#808080" stroke="#000" stroke-width="0.7"/><rect x="3" y="6" width="2" height="9" fill="#ffff00" stroke="#000" stroke-width="0.7"/><rect x="7" y="8" width="8" height="7" fill="#fff" stroke="#000"/><rect x="9" y="10" width="1" height="5" fill="#ff0000"/><rect x="12" y="9" width="1" height="6" fill="#800080"/></svg>
<svg class="a" style="left:396px;top:579px" width="16" height="16" viewBox="0 0 16 16"><rect x="0.5" y="0.5" width="15" height="14" fill="#0000ff" stroke="#000080"/><rect x="2" y="2" width="5" height="11" fill="#00ffff"/><rect x="9" y="2" width="5" height="11" fill="#00ffff"/><path d="M2 4.5 H7 M2 6.5 H7 M2 8.5 H7 M9 4.5 H14 M9 6.5 H14 M9 8.5 H14" stroke="#0000ff"/><rect x="1" y="15" width="14" height="1" fill="#00c0c0"/></svg>
<div class="t" style="left:441px;top:577px;font-weight:bold;font-size:12px">»</div>
<div class="a" style="left:454px;top:578px;width:2px;height:1px;background:#fff;"></div>
<div class="a" style="left:454px;top:578px;width:1px;height:17px;background:#fff;"></div>
<div class="a" style="left:456px;top:578px;width:1px;height:18px;background:#808080;"></div>
<div class="a" style="left:454px;top:595px;width:3px;height:1px;background:#808080;"></div>
<div class="btn" style="left:463px;top:576px;width:70px;height:22px;"></div>
<svg class="a" style="left:467px;top:579px" width="17" height="16" viewBox="0 0 17 16"><text x="0" y="13" font-family="Liberation Sans" font-style="italic" font-weight="bold" font-size="15" fill="#00c0c0" stroke="#004040" stroke-width="0.5">W</text></svg>
<div class="t" style="left:486px;top:581px;font-size:11px">Microso...</div>
<div class="pressed" style="left:536px;top:576px;width:70px;height:22px;"></div>
<svg class="a" style="left:541px;top:579px" width="16" height="16" viewBox="0 0 16 16" shape-rendering="crispEdges"><rect x="0" y="0" width="16" height="16" fill="#000"/><rect x="1" y="1" width="14" height="8" fill="#00ffff"/><rect x="1" y="9" width="14" height="6" fill="#0000ff"/><rect x="1" y="1" width="14" height="1" fill="#fff"/><rect x="2" y="2" width="12" height="1" fill="#fff"/><path d="M2 3h1v4h-1zM13 3h1v4h-1zM3 6h2v1h-2zM11 6h2v1h-2zM5 3h1v2h-1zM10 3h1v2h-1z" fill="#fff"/><circle cx="9" cy="7.5" r="3.3" fill="#ffff00" shape-rendering="auto"/><rect x="9" y="5" width="2" height="2" fill="#fff"/><rect x="6" y="9" width="3" height="2" fill="#ff0000"/><path d="M3 10h1v1h-1zM12 10h1v1h-1zM2 12h1v1h-1zM6 13h1v1h-1zM10 12h1v1h-1zM13 13h1v1h-1zM8 14h1v1h-1zM4 14h1v1h-1z" fill="#fff"/></svg>
<div class="t" style="left:559px;top:581px;font-weight:bold;font-size:11px;letter-spacing:0.6px">PLAT...</div>
<div class="a" style="left:614px;top:576px;width:184px;height:21px;border-top:1px solid #808080;border-left:1px solid #808080;border-right:1px solid #fff;border-bottom:1px solid #fff"></div>
<svg class="a" style="left:620px;top:579px" width="16" height="16" viewBox="0 0 16 16"><rect x="0.5" y="0.5" width="13" height="10" fill="#fff" stroke="#000"/><text x="1" y="8" font-size="8" font-family="Liberation Sans" font-weight="bold">38</text><rect x="8" y="4" width="7" height="3" fill="#808080"/><circle cx="11.5" cy="12" r="3.5" fill="#fff" stroke="#c00000" stroke-width="1.6"/><rect x="11" y="10" width="1" height="3" fill="#000"/></svg>
<svg class="a" style="left:637px;top:579px" width="16" height="16" viewBox="0 0 16 16"><rect x="0" y="0" width="16" height="16" fill="#000080"/><text x="1" y="12.5" font-size="12" fill="#fff" font-family="Liberation Sans">En</text></svg>
<svg class="a" style="left:654px;top:579px" width="16" height="16" viewBox="0 0 16 16"><rect x="0" y="0" width="16" height="16" fill="#000"/><rect x="1" y="1" width="14" height="14" fill="#c0c0c0"/><path d="M2 14 L10 6" stroke="#e0c000" stroke-width="3"/><circle cx="12" cy="4" r="3" fill="#e0c000"/><rect x="11" y="1" width="3" height="3" fill="#c0c0c0"/></svg>
<svg class="a" style="left:671px;top:579px" width="16" height="16" viewBox="0 0 16 16"><rect x="1.5" y="1.5" width="13" height="10" fill="#c0c0c0" stroke="#000"/><rect x="3" y="3" width="10" height="7" fill="#0000c0"/><path d="M4 8 L12 4" stroke="#ff0000" stroke-width="2"/><rect x="4" y="12" width="8" height="3" fill="#808080"/><path d="M8 15 L15 8" stroke="#ff0000" stroke-width="1.5"/></svg>
<svg class="a" style="left:688px;top:579px" width="16" height="16" viewBox="0 0 16 16"><path d="M1.5 5.5 H4.5 L9.5 1.5 V14.5 L4.5 10.5 H1.5 Z" fill="#ffff80" stroke="#000"/><path d="M12 5 L11 8 L12 11" fill="none" stroke="#808080"/><path d="M14 3 L13 8 L14 13" fill="none" stroke="#c0c0c0"/></svg>
<svg class="a" style="left:705px;top:579px" width="16" height="16" viewBox="0 0 16 16"><rect x="1.5" y="0.5" width="9" height="13" fill="#fff" stroke="#808080"/><path d="M2 4 H10 M2 7 H10" stroke="#808080"/><circle cx="11" cy="11" r="4.5" fill="#fff" stroke="#000" shape-rendering="auto"/><rect x="10" y="10" width="3" height="3" fill="#ff0000"/></svg>
<svg class="a" style="left:722px;top:579px" width="16" height="16" viewBox="0 0 16 16"><rect x="0" y="0" width="16" height="16" fill="#0000a0"/><path d="M9 16 L16 9 V16 Z" fill="#ffff00"/><rect x="5" y="1" width="6" height="5" fill="#00ff00" stroke="#000" stroke-width="0.7"/><rect x="7" y="6" width="2" height="6" fill="#c0c0c0"/><rect x="4" y="12" width="8" height="2" fill="#808080"/></svg>
<svg class="a" style="left:740px;top:579px" width="16" height="16" viewBox="0 0 16 16"><g fill="#fff" stroke="#000" stroke-width="0.8" shape-rendering="auto"><ellipse cx="8" cy="3" rx="2" ry="3"/><ellipse cx="8" cy="13" rx="2" ry="3"/><ellipse cx="3" cy="8" rx="3" ry="2"/><ellipse cx="13" cy="8" rx="3" ry="2"/><ellipse cx="4.5" cy="4.5" rx="2" ry="2"/><ellipse cx="11.5" cy="11.5" rx="2" ry="2"/><ellipse cx="11.5" cy="4.5" rx="2" ry="2"/><ellipse cx="4.5" cy="11.5" rx="2" ry="2"/></g><g fill="#ff0000"><rect x="7" y="1" width="2" height="3"/><rect x="7" y="12" width="2" height="3"/><rect x="1" y="7" width="3" height="2"/><rect x="12" y="7" width="3" height="2"/></g><circle cx="8" cy="8" r="2" fill="#ffff00"/></svg>
<div class="t" style="left:764px;top:581px;font-size:11px">22:44</div>
<div class="btn2" style="left:498px;top:103px;width:150px;height:95px;"></div>
<div class="a" style="left:502px;top:107px;width:143px;height:18px;background:#808080;"></div>
<svg class="a" style="left:504px;top:109px" width="17" height="15" viewBox="0 0 17 15" shape-rendering="crispEdges"><path d="M7 2h2v-1h3v1h2v-1h3v12h-3v1h-2v-1h-3v1h-2z" fill="#000"/><rect x="8" y="3" width="3" height="4" fill="#ff0000"/><rect x="12" y="2" width="3" height="4" fill="#00ff00"/><rect x="8" y="8" width="3" height="4" fill="#0000ff"/><rect x="12" y="7" width="3" height="4" fill="#ffff00"/><path d="M0 4h1v1h-1zM0 8h1v1h-1zM2 5h4v1h-4zM2 9h4v1h-4z" fill="#ff0000"/><path d="M0 6h1v1h-1zM0 10h1v1h-1zM2 6h4v1h-4zM2 10h4v1h-4z" fill="#0000ff"/><path d="M2 4h4v1h-4zM2 7h4v1h-4zM2 11h4v1h-4z" fill="#000"/></svg>
<div class="t" style="left:523px;top:112px;font-weight:bold;color:#c0c0c0;font-size:12px;letter-spacing:-0.3px">DataSet Columns</div>
<div class="btn" style="left:626px;top:109px;width:16px;height:14px;"></div>
<svg class="a" style="left:626px;top:109px" width="16" height="14" viewBox="0 0 16 14" shape-rendering="crispEdges"><rect x="4" y="3" width="1" height="1" fill="#000"/><rect x="5" y="3" width="1" height="1" fill="#000"/><rect x="10" y="3" width="1" height="1" fill="#000"/><rect x="11" y="3" width="1" height="1" fill="#000"/><rect x="5" y="4" width="1" height="1" fill="#000"/><rect x="6" y="4" width="1" height="1" fill="#000"/><rect x="9" y="4" width="1" height="1" fill="#000"/><rect x="10" y="4" width="1" height="1" fill="#000"/><rect x="6" y="5" width="1" height="1" fill="#000"/><rect x="7" y="5" width="1" height="1" fill="#000"/><rect x="8" y="5" width="1" height="1" fill="#000"/><rect x="9" y="5" width="1" height="1" fill="#000"/><rect x="7" y="6" width="1" height="1" fill="#000"/><rect x="8" y="6" width="1" height="1" fill="#000"/><rect x="6" y="7" width="1" height="1" fill="#000"/><rect x="7" y="7" width="1" height="1" fill="#000"/><rect x="8" y="7" width="1" height="1" fill="#000"/><rect x="9" y="7" width="1" height="1" fill="#000"/><rect x="5" y="8" width="1" height="1" fill="#000"/><rect x="6" y="8" width="1" height="1" fill="#000"/><rect x="9" y="8" width="1" height="1" fill="#000"/><rect x="10" y="8" width="1" height="1" fill="#000"/><rect x="4" y="9" width="1" height="1" fill="#000"/><rect x="5" y="9" width="1" height="1" fill="#000"/><rect x="10" y="9" width="1" height="1" fill="#000"/><rect x="11" y="9" width="1" height="1" fill="#000"/></svg>
<div class="a" style="left:502px;top:125px;width:143px;height:72px;background:#fff;"></div>
<div class="a" style="left:502px;top:125px;width:143px;height:1px;background:#c0c0c0;"></div>
<div class="a" style="left:502px;top:126px;width:143px;height:13px;background:#000080;"></div>
<div class="t" style="left:503px;top:127px;color:#fff;font-size:11px;letter-spacing:-0.15px">Activity Cost &nbsp;&nbsp;(рубль)</div>
<div class="t" style="left:503px;top:140px;font-size:11px;letter-spacing:-0.15px">Activity Name</div>
<svg class="a" style="left:622px;top:419px" width="1" height="117" viewBox="0 0 1 117" shape-rendering="crispEdges"><rect x="0" y="1" width="1" height="1" fill="#000"/><rect x="0" y="3" width="1" height="1" fill="#000"/><rect x="0" y="5" width="1" height="1" fill="#000"/><rect x="0" y="7" width="1" height="1" fill="#000"/><rect x="0" y="9" width="1" height="1" fill="#000"/><rect x="0" y="11" width="1" height="1" fill="#000"/><rect x="0" y="13" width="1" height="1" fill="#000"/><rect x="0" y="15" width="1" height="1" fill="#000"/><rect x="0" y="17" width="1" height="1" fill="#000"/><rect x="0" y="19" width="1" height="1" fill="#000"/><rect x="0" y="21" width="1" height="1" fill="#000"/><rect x="0" y="23" width="1" height="1" fill="#000"/><rect x="0" y="25" width="1" height="1" fill="#000"/><rect x="0" y="27" width="1" height="1" fill="#000"/><rect x="0" y="29" width="1" height="1" fill="#000"/><rect x="0" y="31" width="1" height="1" fill="#000"/><rect x="0" y="33" width="1" height="1" fill="#000"/><rect x="0" y="35" width="1" height="1" fill="#000"/><rect x="0" y="37" width="1" height="1" fill="#000"/><rect x="0" y="39" width="1" height="1" fill="#000"/><rect x="0" y="41" width="1" height="1" fill="#000"/><rect x="0" y="43" width="1" height="1" fill="#000"/><rect x="0" y="45" width="1" height="1" fill="#000"/><rect x="0" y="47" width="1" height="1" fill="#000"/><rect x="0" y="49" width="1" height="1" fill="#000"/><rect x="0" y="51" width="1" height="1" fill="#000"/><rect x="0" y="53" width="1" height="1" fill="#000"/><rect x="0" y="55" width="1" height="1" fill="#000"/><rect x="0" y="57" width="1" height="1" fill="#000"/><rect x="0" y="59" width="1" height="1" fill="#000"/><rect x="0" y="61" width="1" height="1" fill="#000"/><rect x="0" y="63" width="1" height="1" fill="#000"/><rect x="0" y="65" width="1" height="1" fill="#000"/><rect x="0" y="67" width="1" height="1" fill="#000"/><rect x="0" y="69" width="1" height="1" fill="#000"/><rect x="0" y="71" width="1" height="1" fill="#000"/><rect x="0" y="73" width="1" height="1" fill="#000"/><rect x="0" y="75" width="1" height="1" fill="#000"/><rect x="0" y="77" width="1" height="1" fill="#000"/><rect x="0" y="79" width="1" height="1" fill="#000"/><rect x="0" y="81" width="1" height="1" fill="#000"/><rect x="0" y="83" width="1" height="1" fill="#000"/><rect x="0" y="85" width="1" height="1" fill="#000"/><rect x="0" y="87" width="1" height="1" fill="#000"/><rect x="0" y="89" width="1" height="1" fill="#000"/><rect x="0" y="91" width="1" height="1" fill="#000"/><rect x="0" y="93" width="1" height="1" fill="#000"/><rect x="0" y="95" width="1" height="1" fill="#000"/><rect x="0" y="97" width="1" height="1" fill="#000"/><rect x="0" y="99" width="1" height="1" fill="#000"/><rect x="0" y="101" width="1" height="1" fill="#000"/><rect x="0" y="103" width="1" height="1" fill="#000"/><rect x="0" y="105" width="1" height="1" fill="#000"/><rect x="0" y="107" width="1" height="1" fill="#000"/><rect x="0" y="109" width="1" height="1" fill="#000"/><rect x="0" y="111" width="1" height="1" fill="#000"/><rect x="0" y="113" width="1" height="1" fill="#000"/><rect x="0" y="115" width="1" height="1" fill="#000"/></svg>
<div class="a" style="left:432px;top:419px;width:55px;height:92px;background:#c0c0c0;border:1px solid #000;border-top:none;box-shadow:inset -1px -1px #dfdfdf"></div>
<div class="a" style="left:483px;top:419px;width:1px;height:89px;background:#000;"></div>
<div class="a" style="left:435px;top:507px;width:49px;height:1px;background:#000;"></div>
<div class="a" style="left:435px;top:419px;width:24px;height:22px;background:#c0c0c0;box-shadow:inset -1px -1px #808080,inset 1px 1px #fff"></div>
<div class="a" style="left:459px;top:419px;width:24px;height:22px;background:#c0c0c0;box-shadow:inset -1px -1px #808080,inset 1px 1px #fff"></div>
<div class="a" style="left:435px;top:441px;width:24px;height:22px;background:#c0c0c0;box-shadow:inset -1px -1px #808080,inset 1px 1px #fff"></div>
<div class="a" style="left:459px;top:441px;width:24px;height:22px;background:#c0c0c0;box-shadow:inset -1px -1px #808080,inset 1px 1px #fff"></div>
<div class="a" style="left:435px;top:463px;width:24px;height:22px;background:#c0c0c0;box-shadow:inset -1px -1px #808080,inset 1px 1px #fff"></div>
<div class="a" style="left:459px;top:463px;width:24px;height:22px;background:#c0c0c0;box-shadow:inset -1px -1px #808080,inset 1px 1px #fff"></div>
<div class="a" style="left:435px;top:485px;width:24px;height:22px;background:#c0c0c0;box-shadow:inset -1px -1px #808080,inset 1px 1px #fff"></div>
<div class="a" style="left:459px;top:485px;width:24px;height:22px;background:#c0c0c0;box-shadow:inset -1px -1px #808080,inset 1px 1px #fff"></div>
<svg class="a" style="left:439px;top:425px" width="15" height="10" viewBox="0 0 15 10" shape-rendering="crispEdges"><rect x="0" y="0" width="1" height="1" fill="#000"/><rect x="4" y="0" width="1" height="1" fill="#000"/><rect x="0" y="1" width="1" height="1" fill="#000"/><rect x="4" y="1" width="1" height="1" fill="#000"/><rect x="1" y="2" width="1" height="1" fill="#000"/><rect x="3" y="2" width="1" height="1" fill="#000"/><rect x="1" y="3" width="1" height="1" fill="#000"/><rect x="3" y="3" width="1" height="1" fill="#000"/><rect x="2" y="4" width="1" height="1" fill="#000"/><rect x="2" y="5" width="1" height="1" fill="#000"/><rect x="1" y="6" width="1" height="1" fill="#000"/><rect x="3" y="6" width="1" height="1" fill="#000"/><rect x="1" y="7" width="1" height="1" fill="#000"/><rect x="3" y="7" width="1" height="1" fill="#000"/><rect x="0" y="8" width="1" height="1" fill="#000"/><rect x="4" y="8" width="1" height="1" fill="#000"/><rect x="0" y="9" width="1" height="1" fill="#000"/><rect x="4" y="9" width="1" height="1" fill="#000"/><rect x="7" y="3" width="1" height="1" fill="#000"/><rect x="7" y="4" width="1" height="1" fill="#000"/><rect x="5" y="5" width="1" height="1" fill="#000"/><rect x="6" y="5" width="1" height="1" fill="#000"/><rect x="7" y="5" width="1" height="1" fill="#000"/><rect x="8" y="5" width="1" height="1" fill="#000"/><rect x="9" y="5" width="1" height="1" fill="#000"/><rect x="7" y="6" width="1" height="1" fill="#000"/><rect x="7" y="7" width="1" height="1" fill="#000"/><rect x="10" y="0" width="1" height="1" fill="#000"/><rect x="14" y="0" width="1" height="1" fill="#000"/><rect x="10" y="1" width="1" height="1" fill="#000"/><rect x="14" y="1" width="1" height="1" fill="#000"/><rect x="11" y="2" width="1" height="1" fill="#000"/><rect x="13" y="2" width="1" height="1" fill="#000"/><rect x="11" y="3" width="1" height="1" fill="#000"/><rect x="13" y="3" width="1" height="1" fill="#000"/><rect x="12" y="4" width="1" height="1" fill="#000"/><rect x="12" y="5" width="1" height="1" fill="#000"/><rect x="12" y="6" width="1" height="1" fill="#000"/><rect x="12" y="7" width="1" height="1" fill="#000"/><rect x="12" y="8" width="1" height="1" fill="#000"/><rect x="12" y="9" width="1" height="1" fill="#000"/></svg>
<svg class="a" style="left:462px;top:422px" width="18" height="18" viewBox="0 0 18 18" shape-rendering="crispEdges"><rect x="4.5" y="-1.5" width="11" height="6" fill="#fff" stroke="#000"/><rect x="4.5" y="10.5" width="11" height="6" fill="#fff" stroke="#000"/><path d="M0 7h4v1h-4zM3 6h1v3h-1zM2 5h1v1h-1zM2 9h1v1h-1z" fill="#000"/></svg>
<svg class="a" style="left:438px;top:443px" width="18" height="18" viewBox="0 0 18 18" shape-rendering="crispEdges"><circle cx="8.5" cy="8.5" r="7" fill="#fff" stroke="#000" stroke-width="1.2" shape-rendering="auto"/><path d="M8 3h1v6h4v1h-5z" fill="#000"/></svg>
<svg class="a" style="left:462px;top:443px" width="18" height="18" viewBox="0 0 18 18" shape-rendering="crispEdges"><path d="M2.5 1.5 H10.5 L14.5 5.5 V15.5 H2.5 Z" fill="#fff" stroke="#000"/><path d="M10.5 1.5 V5.5 H14.5" fill="none" stroke="#000"/><path d="M8 9h1v5h-1zM10 9h1v5h-1zM7 10h5v1h-5zM7 12h5v1h-5z" fill="#000"/></svg>
<svg class="a" style="left:438px;top:465px" width="18" height="18" viewBox="0 0 18 18" shape-rendering="crispEdges"><rect x="1.5" y="4.5" width="14" height="11" fill="#fff" stroke="#000"/><rect x="1" y="3" width="15" height="2" fill="#000"/><path d="M2 1h1v3h-1zM4 1h1v3h-1zM6 1h1v3h-1zM8 1h1v3h-1zM10 1h1v3h-1zM12 1h1v3h-1zM14 1h1v3h-1z" fill="#000"/><path d="M3 8h4v1h-4zM6 8h1v3h-1zM3 11h4v1h-4zM3 11h1v3h-1zM3 13h4v1h-4zM9 8h1v4h-1zM9 11h4v1h-4zM12 8h1v6h-1z" fill="#000"/></svg>
<svg class="a" style="left:462px;top:467px" width="18" height="16" viewBox="0 0 18 16" shape-rendering="crispEdges"><path d="M0 1h1v6h-1zM0 1h4v1h-4zM3 1h1v3h-1zM0 3h4v1h-4zM2 4h1v1h-1zM3 5h1v2h-1z" fill="#000"/><path d="M6 1h1v6h-1zM6 1h4v1h-4zM6 3h3v1h-3zM6 6h4v1h-4z" fill="#000"/><path d="M12 2h1v4h-1zM13 1h3v1h-3zM13 6h3v1h-3z" fill="#000"/><path d="M7 8h1v6h-1zM9 8h1v6h-1zM6 9h5v1h-5zM6 12h5v1h-5z" fill="#000"/></svg>
<svg class="a" style="left:438px;top:489px" width="18" height="16" viewBox="0 0 18 16" shape-rendering="crispEdges"><path d="M1 2h1v4h-1zM2 1h3v1h-3zM2 6h3v1h-3z" fill="#000"/><path d="M6 1h1v6h-1zM7 2h1v1h-1zM8 3h1v1h-1zM9 4h1v1h-1zM10 1h1v6h-1z" fill="#000"/><path d="M12 1h5v1h-5zM14 2h1v5h-1z" fill="#000"/><path d="M7 8h1v6h-1zM9 8h1v6h-1zM6 9h5v1h-5zM6 12h5v1h-5z" fill="#000"/></svg>
<svg class="a" style="left:462px;top:487px" width="20" height="18" viewBox="0 0 20 18" shape-rendering="crispEdges"><rect x="2" y="2" width="1" height="1" fill="#000"/><rect x="2" y="4" width="1" height="1" fill="#000"/><rect x="2" y="6" width="1" height="1" fill="#000"/><rect x="4" y="2" width="1" height="1" fill="#000"/><rect x="4" y="4" width="1" height="1" fill="#000"/><rect x="4" y="6" width="1" height="1" fill="#000"/><rect x="6" y="2" width="1" height="1" fill="#000"/><rect x="6" y="4" width="1" height="1" fill="#000"/><rect x="6" y="6" width="1" height="1" fill="#000"/><rect x="8" y="2" width="1" height="1" fill="#000"/><rect x="8" y="4" width="1" height="1" fill="#000"/><rect x="8" y="6" width="1" height="1" fill="#000"/><rect x="10" y="2" width="1" height="1" fill="#000"/><rect x="10" y="4" width="1" height="1" fill="#000"/><rect x="10" y="6" width="1" height="1" fill="#000"/><rect x="12" y="2" width="1" height="1" fill="#000"/><rect x="12" y="4" width="1" height="1" fill="#000"/><rect x="12" y="6" width="1" height="1" fill="#000"/><rect x="14" y="2" width="1" height="1" fill="#000"/><rect x="14" y="4" width="1" height="1" fill="#000"/><rect x="14" y="6" width="1" height="1" fill="#000"/><rect x="16" y="1" width="1" height="1" fill="#000"/><rect x="1" y="7" width="16" height="10" fill="#000"/><path d="M3 9h1v6h-1zM6 9h1v6h-1zM4 8h2v1h-2zM4 15h2v1h-2zM8 8h1v8h-1zM8 15h3v1h-3zM12 8h1v8h-1zM12 8h3v1h-3zM12 11h3v1h-3zM12 15h3v1h-3z" fill="#fff"/></svg>
<div class="a" style="left:171px;top:148px;width:458px;height:277px;background:#c0c0c0;box-shadow:inset -1px -1px #000,inset 1px 1px #c0c0c0,inset -2px -2px #808080,inset 2px 2px #fff"></div>
<div class="a" style="left:174px;top:151px;width:453px;height:18px;background:#000080;"></div>
<div class="t" style="left:177px;top:154px;font-weight:bold;color:#fff;font-size:12px">Text Field Properties</div>
<div class="btn" style="left:609px;top:153px;width:16px;height:14px;"></div>
<svg class="a" style="left:609px;top:153px" width="16" height="14" viewBox="0 0 16 14" shape-rendering="crispEdges"><rect x="4" y="3" width="1" height="1" fill="#000"/><rect x="5" y="3" width="1" height="1" fill="#000"/><rect x="10" y="3" width="1" height="1" fill="#000"/><rect x="11" y="3" width="1" height="1" fill="#000"/><rect x="5" y="4" width="1" height="1" fill="#000"/><rect x="6" y="4" width="1" height="1" fill="#000"/><rect x="9" y="4" width="1" height="1" fill="#000"/><rect x="10" y="4" width="1" height="1" fill="#000"/><rect x="6" y="5" width="1" height="1" fill="#000"/><rect x="7" y="5" width="1" height="1" fill="#000"/><rect x="8" y="5" width="1" height="1" fill="#000"/><rect x="9" y="5" width="1" height="1" fill="#000"/><rect x="7" y="6" width="1" height="1" fill="#000"/><rect x="8" y="6" width="1" height="1" fill="#000"/><rect x="6" y="7" width="1" height="1" fill="#000"/><rect x="7" y="7" width="1" height="1" fill="#000"/><rect x="8" y="7" width="1" height="1" fill="#000"/><rect x="9" y="7" width="1" height="1" fill="#000"/><rect x="5" y="8" width="1" height="1" fill="#000"/><rect x="6" y="8" width="1" height="1" fill="#000"/><rect x="9" y="8" width="1" height="1" fill="#000"/><rect x="10" y="8" width="1" height="1" fill="#000"/><rect x="4" y="9" width="1" height="1" fill="#000"/><rect x="5" y="9" width="1" height="1" fill="#000"/><rect x="10" y="9" width="1" height="1" fill="#000"/><rect x="11" y="9" width="1" height="1" fill="#000"/></svg>
<div class="t" style="left:180px;top:184px;font-size:11px;letter-spacing:-0.15px;transform:scaleY(1.12);transform-origin:0 0">Text:</div>
<div class="sunk" style="left:207px;top:180px;width:411px;height:20px;"></div>
<div class="t" style="left:210px;top:183px;font-size:11px;letter-spacing:-0.15px;transform:scaleY(1.12);transform-origin:0 0">Activity Name</div>
<div class="t" style="left:180px;top:212px;font-size:11px;letter-spacing:-0.15px;transform:scaleY(1.12);transform-origin:0 0">Name:</div>
<div class="sunk" style="left:221px;top:207px;width:150px;height:19px;"></div>
<div class="t" style="left:180px;top:237px;font-size:11px;letter-spacing:-0.15px;transform:scaleY(1.12);transform-origin:0 0">Height:</div>
<div class="sunk" style="left:221px;top:232px;width:53px;height:20px;"></div>
<div class="t" style="left:224px;top:235px;font-size:11px;letter-spacing:-0.15px;transform:scaleY(1.12);transform-origin:0 0">0.160</div>
<div class="t" style="left:282px;top:237px;font-size:11px;letter-spacing:-0.15px;transform:scaleY(1.12);transform-origin:0 0">Width:</div>
<div class="sunk" style="left:318px;top:232px;width:53px;height:20px;"></div>
<div class="t" style="left:321px;top:235px;font-size:11px;letter-spacing:-0.15px;transform:scaleY(1.12);transform-origin:0 0">2.700</div>
<div class="chk" style="left:384px;top:235px;width:13px;height:13px;"></div>
<div class="t" style="left:402px;top:236px;font-size:11px;letter-spacing:-0.15px;transform:scaleY(1.12);transform-origin:0 0">Word Wrap</div>
<div class="a" style="left:180px;top:263px;width:275px;height:65px;border:1px solid #808080;box-shadow:1px 1px #fff,inset 1px 1px #fff"></div>
<div class="t" style="left:186px;top:257px;font-size:11px;letter-spacing:-0.15px;transform:scaleY(1.12);transform-origin:0 0;color:transparent;background:#c0c0c0;padding:0 2px">Position</div>
<div class="t" style="left:188px;top:257px;font-size:11px;letter-spacing:-0.15px;transform:scaleY(1.12);transform-origin:0 0">Position</div>
<div class="t" style="left:194px;top:282px;font-size:11px;letter-spacing:-0.15px;transform:scaleY(1.12);transform-origin:0 0">From Left:</div>
<div class="sunk" style="left:246px;top:276px;width:53px;height:20px;"></div>
<div class="t" style="left:249px;top:279px;font-size:11px;letter-spacing:-0.15px;transform:scaleY(1.12);transform-origin:0 0">2.969</div>
<div class="t" style="left:324px;top:282px;font-size:11px;letter-spacing:-0.15px;transform:scaleY(1.12);transform-origin:0 0">From Top:</div>
<div class="sunk" style="left:378px;top:276px;width:53px;height:20px;"></div>
<div class="t" style="left:381px;top:279px;font-size:11px;letter-spacing:-0.15px;transform:scaleY(1.12);transform-origin:0 0">0.094</div>
<div class="chk" style="left:192px;top:308px;width:13px;height:13px;"></div>
<div class="t" style="left:210px;top:308px;font-size:11px;letter-spacing:-0.15px;transform:scaleY(1.12);transform-origin:0 0">Can Slide Left</div>
<div class="chk" style="left:324px;top:308px;width:13px;height:13px;"></div>
<div class="t" style="left:342px;top:308px;font-size:11px;letter-spacing:-0.15px;transform:scaleY(1.12);transform-origin:0 0">Can Move Down</div>
<svg class="a" style="left:324px;top:308px" width="13" height="13" viewBox="0 0 13 13" shape-rendering="crispEdges"><path d="M3 6 L5 9 L10 3" stroke="#000" stroke-width="2" fill="none"/></svg>
<div class="a" style="left:468px;top:210px;width:148px;height:116px;border:1px solid #808080;box-shadow:1px 1px #fff,inset 1px 1px #fff"></div>
<div class="t" style="left:474px;top:204px;font-size:11px;letter-spacing:-0.15px;transform:scaleY(1.12);transform-origin:0 0;color:transparent;background:#c0c0c0;padding:0 2px">Borders</div>
<div class="t" style="left:476px;top:204px;font-size:11px;letter-spacing:-0.15px;transform:scaleY(1.12);transform-origin:0 0">Borders</div>
<div class="chk" style="left:480px;top:224px;width:13px;height:13px;"></div>
<div class="t" style="left:498px;top:224px;font-size:11px;letter-spacing:-0.15px;transform:scaleY(1.12);transform-origin:0 0">All</div>
<div class="chk" style="left:486px;top:245px;width:13px;height:13px;"></div>
<div class="t" style="left:504px;top:245px;font-size:11px;letter-spacing:-0.15px;transform:scaleY(1.12);transform-origin:0 0">Top</div>
<div class="chk" style="left:486px;top:266px;width:13px;height:13px;"></div>
<div class="t" style="left:504px;top:266px;font-size:11px;letter-spacing:-0.15px;transform:scaleY(1.12);transform-origin:0 0">Bottom</div>
<div class="chk" style="left:486px;top:287px;width:13px;height:13px;"></div>
<div class="t" style="left:504px;top:287px;font-size:11px;letter-spacing:-0.15px;transform:scaleY(1.12);transform-origin:0 0">Left</div>
<div class="chk" style="left:486px;top:308px;width:13px;height:13px;"></div>
<div class="t" style="left:504px;top:308px;font-size:11px;letter-spacing:-0.15px;transform:scaleY(1.12);transform-origin:0 0">Right</div>
<div class="t" style="left:556px;top:251px;font-size:11px;letter-spacing:-0.15px;transform:scaleY(1.12);transform-origin:0 0">1234.56</div>
<div class="a" style="left:180px;top:343px;width:161px;height:67px;border:1px solid #808080;box-shadow:1px 1px #fff,inset 1px 1px #fff"></div>
<div class="t" style="left:186px;top:337px;font-size:11px;letter-spacing:-0.15px;transform:scaleY(1.12);transform-origin:0 0;color:transparent;background:#c0c0c0;padding:0 2px">Repeating Values</div>
<div class="t" style="left:188px;top:337px;font-size:11px;letter-spacing:-0.15px;transform:scaleY(1.12);transform-origin:0 0">Repeating Values</div>
<div class="chk" style="left:189px;top:356px;width:13px;height:13px;"></div>
<svg class="a" style="left:189px;top:356px" width="13" height="13" viewBox="0 0 13 13" shape-rendering="crispEdges"><path d="M3 6 L5 9 L10 3" stroke="#000" stroke-width="2" fill="none"/></svg>
<div class="t" style="left:208px;top:355px;font-size:11px;letter-spacing:-0.15px;transform:scaleY(1.12);transform-origin:0 0">Suppress</div>
<div class="a" style="left:206px;top:355px;width:47px;height:15px;border:1px dotted #000"></div>
<div class="chk" style="left:198px;top:374px;width:13px;height:13px;"></div>
<div class="t" style="left:216px;top:374px;font-size:11px;letter-spacing:-0.15px;transform:scaleY(1.12);transform-origin:0 0">Redisplay After Group</div>
<div class="chk" style="left:198px;top:391px;width:13px;height:13px;"></div>
<div class="t" style="left:216px;top:391px;font-size:11px;letter-spacing:-0.15px;transform:scaleY(1.12);transform-origin:0 0">Redisplay After Page</div>
<div class="t" style="left:468px;top:351px;font-size:11px;letter-spacing:-0.15px;transform:scaleY(1.12);transform-origin:0 0">Pattern:</div>
<div class="sunk" style="left:518px;top:347px;width:101px;height:24px;"></div>
<div class="a" style="left:521px;top:350px;width:80px;height:18px;border:1px solid #000"></div>
<div class="t" style="left:524px;top:353px;font-size:11px;letter-spacing:-0.15px;transform:scaleY(1.12);transform-origin:0 0">None</div>
<div class="btn" style="left:601px;top:350px;width:16px;height:18px;"></div>
<svg class="a" style="left:601px;top:350px" width="16" height="18" viewBox="0 0 16 18" shape-rendering="crispEdges"><rect x="4" y="7" width="7" height="1" fill="#000"/><rect x="5" y="8" width="5" height="1" fill="#000"/><rect x="6" y="9" width="3" height="1" fill="#000"/><rect x="7" y="10" width="1" height="1" fill="#000"/></svg>
<div class="a" style="left:447px;top:387px;width:76px;height:24px;border:1px solid #000;background:#c0c0c0;box-shadow:inset -1px -1px #000,inset 1px 1px #fff,inset -2px -2px #808080,inset 2px 2px #dfdfdf"></div>
<div class="t" style="left:447px;top:393px;width:76px;text-align:center;font-size:11px">OK</div>
<div class="btn" style="left:542px;top:387px;width:76px;height:24px;"></div>
<div class="t" style="left:542px;top:393px;width:76px;text-align:center;font-size:11px">Cancel</div>
</body></html>
